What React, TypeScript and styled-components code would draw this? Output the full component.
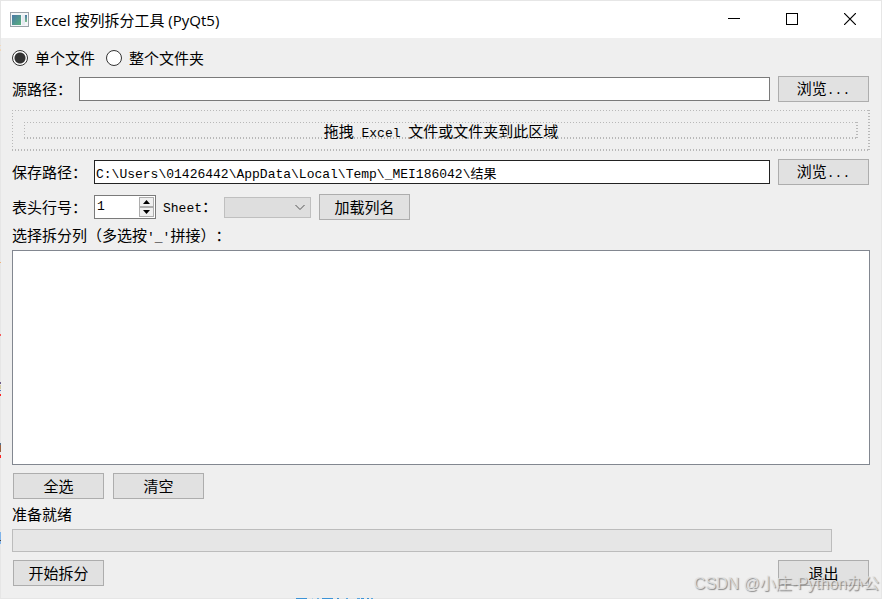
import React, { useState } from 'react';
import styled, { createGlobalStyle } from 'styled-components';

const GlobalStyle = createGlobalStyle`
  * { box-sizing: border-box; }
  html, body, #root { height: 100%; margin: 0; }
  body {
    background: #efefef;
    color: #000;
    font: 15px/20px "Noto Sans CJK SC", sans-serif;
    text-spacing-trim: space-all;
    overflow: hidden;
  }
  button, input, select { font: inherit; color: inherit; margin: 0; border-radius: 0; }
`;

const Window = styled.div`
  position: relative;
  display: flex;
  flex-direction: column;
  min-height: 100vh;
  border: 1px solid #e6e6e6;
  background: #efefef;
`;

const EdgeStrip = styled.svg`
  position: absolute;
  left: -1px;
  top: 0;
  width: 1px;
  height: 598px;
`;

const BottomStrip = styled.svg`
  position: absolute;
  left: 294px;
  bottom: -1px;
  width: 80px;
  height: 1px;
`;

const TitleBar = styled.header`
  display: flex;
  align-items: center;
  height: 37px;
  padding: 0 2px 0 9px;
  background: #fff;
`;

const Title = styled.h1`
  flex: 1;
  margin: 0 0 0 5px;
  font: 400 15px/20px "Open Sans", "Noto Sans CJK SC", sans-serif;
`;

const CaptionButton = styled.button`
  display: grid;
  place-items: center;
  align-self: flex-start;
  width: 58px;
  height: 36px;
  padding: 0;
  border: 0;
  background: transparent;
`;

const Form = styled.main`
  flex: 1;
  display: flex;
  flex-direction: column;
  padding: 10px 11px 12px;
`;

const Row = styled.div<{ $gap?: number; $top?: number; $height?: number; $spread?: boolean }>`
  display: flex;
  align-items: center;
  justify-content: ${p => (p.$spread ? 'space-between' : 'flex-start')};
  gap: ${p => p.$gap ?? 7}px;
  margin-top: ${p => p.$top ?? 0}px;
  min-height: ${p => p.$height ?? 26}px;
`;

const RadioLabel = styled.label`
  display: flex;
  align-items: center;
  gap: 7px;
`;

const Radio = styled.input`
  appearance: none;
  width: 16px;
  height: 16px;
  border: 1px solid #333;
  border-radius: 50%;
  background: #fff;
  &:checked { background: radial-gradient(circle, #333 5px, #fff 6px); }
`;

const Latin = styled.span`
  font-family: "Liberation Mono", monospace;
  font-size: 13px;
`;

const FieldLabel = styled.label`
  white-space: nowrap;
`;

const PathInput = styled.input<{ $strong?: boolean }>`
  flex: 1;
  min-width: 0;
  height: 24px;
  padding: 0 1px;
  border: 1px solid ${p => (p.$strong ? '#222' : '#7a7a7a')};
  background: #fff;
  outline: 0;
  font: 13px/20px "Liberation Mono", "Noto Sans CJK SC", monospace;
`;

const PushButton = styled.button`
  width: 91px;
  height: 26px;
  margin: 0 1px;
  padding: 0;
  border: 1px solid #adadad;
  background: #e1e1e1;
  line-height: 20px;
`;

const DottedFrame = styled.div`
  --across: repeating-linear-gradient(90deg, #b8b8b8 0 1px, transparent 1px 3px);
  --down: repeating-linear-gradient(180deg, #b8b8b8 0 1px, transparent 1px 3px);
  background:
    var(--across) top / 100% 1px no-repeat,
    var(--across) bottom / 100% 2px no-repeat,
    var(--down) left / 1px 100% no-repeat,
    var(--down) right / 2px 100% no-repeat;
`;

const DropZone = styled(DottedFrame)`
  margin-top: 8px;
  padding: 12px;
`;

const DropText = styled(DottedFrame)`
  height: 17px;
  line-height: 17px;
  text-align: center;
`;

const SpinBox = styled.div`
  display: flex;
  width: 62px;
  height: 24px;
  border: 1px solid #7a7a7a;
  background: #fff;
`;

const SpinInput = styled.input`
  flex: 1;
  min-width: 0;
  padding: 0 2px;
  border: 0;
  outline: 0;
  background: transparent;
  font-family: "Liberation Mono", monospace;
  font-size: 13px;
`;

const SpinButtons = styled.div`
  display: flex;
  flex-direction: column;
  width: 15px;
  margin: 1px 1px 1px 0;
`;

const SpinButton = styled.button`
  flex: 1;
  display: grid;
  place-items: center;
  padding: 0;
  border: 1px solid #adadad;
  background: #f0f0f0;
`;

const SelectBox = styled.div`
  position: relative;
  width: 87px;
  height: 21px;
`;

const Select = styled.select`
  display: block;
  appearance: none;
  width: 100%;
  height: 100%;
  border: 1px solid #bfbfbf;
  background: #dedede;
  opacity: 1;
`;

const Chevron = styled.svg`
  position: absolute;
  right: 6px;
  top: 7px;
  pointer-events: none;
`;

const ColumnList = styled.div`
  flex: 1;
  min-height: 100px;
  margin-top: 2px;
  border: 1px solid #828790;
  background: #fff;
`;

const ProgressTrack = styled.div`
  height: 23px;
  margin: 5px 38px 0 0;
  border: 1px solid #bcbcbc;
  background: #e6e6e6;
`;

const Watermark = styled.div`
  position: absolute;
  right: 2px;
  bottom: 2px;
  font: 16px/24px "Liberation Sans", "Noto Sans CJK SC", sans-serif;
  color: rgba(226, 226, 226, 0.85);
  text-shadow: 1px 1px 1px rgba(110, 110, 110, 0.8);
  white-space: nowrap;
  pointer-events: none;
`;

const edgeMarks: [number, number, string][] = [
  [44, 1, '#f3d9bb'], [48, 2, '#f3d9bb'], [261, 1, '#eeb27c'], [333, 2, '#f45c5c'],
  [381, 2, '#6c5a86'], [384, 4, '#d2c9a4'], [389, 1, '#4c78c4'], [393, 2, '#f22'],
  [442, 2, '#53718e'], [444, 7, '#9a6140'], [454, 3, '#f22'],
  [531, 8, '#80b4ea'], [539, 1, '#444'], [540, 3, '#80b4ea'],
];

const bottomMarks: [number, number, string][] = [
  [1, 11, '#3c93d6'], [17, 1, '#a9d0ec'], [22, 2, '#6cb0e2'], [27, 11, '#3c93d6'],
  [42, 2, '#3c93d6'], [51, 2, '#5aa5de'], [62, 3, '#5aa5de'], [66, 3, '#3c93d6'],
  [72, 2, '#3c93d6'], [76, 2, '#5aa5de'],
];

function AppIcon() {
  return (
    <svg width="20" height="16" viewBox="0 0 20 16" aria-hidden="true">
      <defs>
        <linearGradient id="pane" x1="0" y1="0" x2="1" y2="1">
          <stop offset="0" stopColor="#4a78a8" />
          <stop offset="1" stopColor="#58b07c" />
        </linearGradient>
        <linearGradient id="bar" x1="0" y1="0" x2="0" y2="1">
          <stop offset="0" stopColor="#4a78a8" />
          <stop offset="1" stopColor="#7cc08c" />
        </linearGradient>
      </defs>
      <rect x="0.5" y="0.5" width="18" height="14" fill="#f4f6f8" stroke="#9ba3aa" />
      <rect x="2" y="3" width="9" height="10" fill="url(#pane)" />
      <rect x="12" y="3" width="3" height="10" fill="#e6eaf0" />
      <rect x="15" y="3" width="2" height="7" fill="url(#bar)" />
    </svg>
  );
}

export default function App() {
  const [mode, setMode] = useState('file');
  const [target, setTarget] = useState('C:\\Users\\01426442\\AppData\\Local\\Temp\\_MEI186042\\结果');
  const [source, setSource] = useState('');
  const [header, setHeader] = useState(1);

  return (
    <>
      <GlobalStyle />
      <Window>
        <TitleBar>
          <AppIcon />
          <Title>Excel 按列拆分工具 (PyQt5)</Title>
          <CaptionButton aria-label="最小化">
            <svg width="12" height="12" shapeRendering="crispEdges"><path d="M0 5.5h12" stroke="#000" /></svg>
          </CaptionButton>
          <CaptionButton aria-label="最大化">
            <svg width="12" height="12" shapeRendering="crispEdges"><rect x="0.5" y="0.5" width="11" height="11" fill="none" stroke="#000" /></svg>
          </CaptionButton>
          <CaptionButton aria-label="关闭">
            <svg width="12" height="12"><path d="M0 0L12 12M12 0L0 12" stroke="#000" strokeWidth="1.2" /></svg>
          </CaptionButton>
        </TitleBar>

        <Form>
          <Row $gap={11} $height={20}>
            <RadioLabel>
              <Radio type="radio" name="mode" checked={mode === 'file'} onChange={() => setMode('file')} />
              单个文件
            </RadioLabel>
            <RadioLabel>
              <Radio type="radio" name="mode" checked={mode === 'folder'} onChange={() => setMode('folder')} />
              整个文件夹
            </RadioLabel>
          </Row>

          <Row $top={8}>
            <FieldLabel htmlFor="source">源路径：</FieldLabel>
            <PathInput id="source" value={source} onChange={e => setSource(e.target.value)} />
            <PushButton>浏览<Latin>...</Latin></PushButton>
          </Row>

          <DropZone>
            <DropText>拖拽<Latin> Excel </Latin>文件或文件夹到此区域</DropText>
          </DropZone>

          <Row $top={8}>
            <FieldLabel htmlFor="target">保存路径：</FieldLabel>
            <PathInput id="target" $strong value={target} onChange={e => setTarget(e.target.value)} />
            <PushButton>浏览<Latin>...</Latin></PushButton>
          </Row>

          <Row $top={9}>
            <FieldLabel htmlFor="header">表头行号：</FieldLabel>
            <SpinBox>
              <SpinInput id="header" value={header} onChange={e => setHeader(Number(e.target.value) || 1)} />
              <SpinButtons>
                <SpinButton aria-label="增加" onClick={() => setHeader(header + 1)}>
                  <svg width="7" height="4"><path d="M0 4L3.5 0L7 4z" /></svg>
                </SpinButton>
                <SpinButton aria-label="减少" onClick={() => setHeader(Math.max(1, header - 1))}>
                  <svg width="7" height="4"><path d="M0 0L3.5 4L7 0z" /></svg>
                </SpinButton>
              </SpinButtons>
            </SpinBox>
            <FieldLabel htmlFor="sheet"><Latin>Sheet</Latin>：</FieldLabel>
            <SelectBox>
              <Select id="sheet" disabled />
              <Chevron width="10" height="7"><path d="M0.5 1L5 5.5L9.5 1" fill="none" stroke="#555" /></Chevron>
            </SelectBox>
            <PushButton>加载列名</PushButton>
          </Row>

          <Row $top={5} $height={20} id="columns-label">
            <span>选择拆分列（多选按<Latin>'_'</Latin>拼接）：</span>
          </Row>
          <ColumnList role="listbox" aria-labelledby="columns-label" />

          <Row $top={8}>
            <PushButton>全选</PushButton>
            <PushButton>清空</PushButton>
          </Row>
          <Row $top={5} $height={20} id="status">准备就绪</Row>
          <ProgressTrack role="progressbar" aria-labelledby="status" aria-valuenow={0} />
          <Row $top={8} $spread>
            <PushButton>开始拆分</PushButton>
            <PushButton>退出</PushButton>
          </Row>
        </Form>

        <Watermark>CSDN @小庄-Python办公</Watermark>
        <EdgeStrip shapeRendering="crispEdges" aria-hidden="true">
          {edgeMarks.map(([y, h, fill]) => <rect key={y} x="0" y={y} width="1" height={h} fill={fill} />)}
        </EdgeStrip>
        <BottomStrip shapeRendering="crispEdges" aria-hidden="true">
          {bottomMarks.map(([x, w, fill]) => <rect key={x} x={x} y="0" width={w} height="1" fill={fill} />)}
        </BottomStrip>
      </Window>
    </>
  );
}
